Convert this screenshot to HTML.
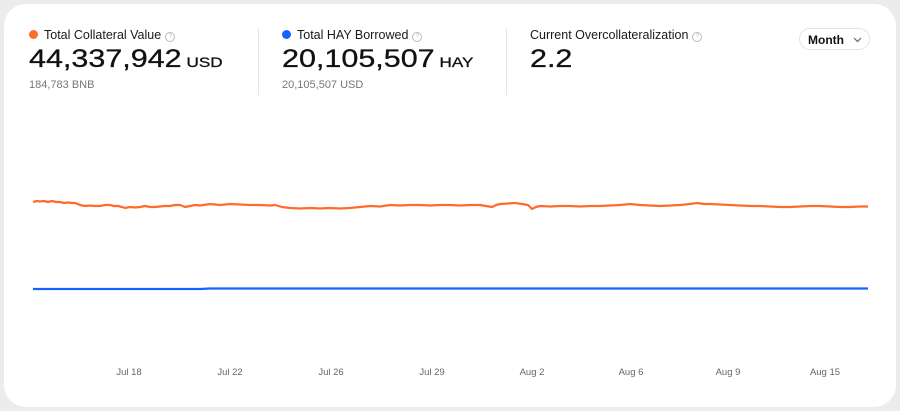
<!DOCTYPE html>
<html><head><style>
body{margin:0;width:900px;height:411px;background:#ececec;font-family:"Liberation Sans",sans-serif;overflow:hidden;position:relative}
.card{position:absolute;left:4px;top:4px;width:892px;height:403px;background:#fff;border-radius:22px}
.lbl{position:absolute;top:28px;font-size:12.5px;color:#1a1a1a;white-space:nowrap}
.dot{display:inline-block;width:9px;height:9px;border-radius:50%;margin-right:6px;vertical-align:0}
.q{display:inline-block;width:8px;height:8px;border:1px solid #bbb;border-radius:50%;font-size:6px;color:#bbb;text-align:center;line-height:8px;margin-left:4px;vertical-align:1px}
.big{position:absolute;top:45px;font-size:25px;color:#111;transform:scaleX(1.22);transform-origin:left;white-space:nowrap;letter-spacing:0;-webkit-text-stroke:0.3px #111}
.big span{font-size:14px;margin-left:4px}
.sub{position:absolute;top:79px;font-size:11px;color:#777}
.sep{position:absolute;top:28px;width:1px;height:67px;background:#e6e6e6}
.btn{position:absolute;left:799px;top:28px;width:71px;height:22px;border:1px solid #e3e3e3;border-radius:12px;font-size:12px;font-weight:bold;color:#111;line-height:22px;padding-left:8px;box-sizing:border-box}
.ax{position:absolute;top:367px;font-size:9.5px;color:#666;transform:translateX(-50%)}
</style></head><body>
<div class="card"></div>
<div class="lbl" style="left:29px"><span class="dot" style="background:#ff6b2c"></span>Total Collateral Value<span class="q">?</span></div>
<div class="big" style="left:29px">44,337,942<span>USD</span></div>
<div class="sub" style="left:29px">184,783 BNB</div>
<div class="sep" style="left:258px"></div>
<div class="lbl" style="left:282px"><span class="dot" style="background:#1463ff"></span>Total HAY Borrowed<span class="q">?</span></div>
<div class="big" style="left:282px">20,105,507<span>HAY</span></div>
<div class="sub" style="left:282px">20,105,507 USD</div>
<div class="sep" style="left:506px"></div>
<div class="lbl" style="left:530px">Current Overcollateralization<span class="q">?</span></div>
<div class="big" style="left:530px">2.2</div>
<div class="btn">Month<svg style="position:absolute;left:53px;top:8px" width="9" height="6"><path d="M1 1l3.5 3.5L8 1" fill="none" stroke="#666" stroke-width="1.2"/></svg></div>
<svg style="position:absolute;left:0;top:0" width="900" height="411">
<polyline fill="none" stroke="#ff6b2c" stroke-width="2.2" stroke-linejoin="round" points="33,202 37,201 40,201.5 44,201 48,202 52,201 56,202 60,202 64,203 68,202.5 72,203 75,203 80,205 85,206 90,205.5 95,206 100,206 105,205 110,205 114,206 118,206 122,207 125,208 130,207 135,207.5 140,207 145,206 150,207 155,207 160,206.5 165,206 170,206 175,205 180,205 185,207 190,206 195,205 200,205.5 210,204 220,205 230,204 240,204.5 250,205 260,205 270,205.5 275,205 282,207 290,208 300,208.5 310,208 320,208.5 330,208 340,208.5 350,208 360,207 370,206 380,206.5 390,205 400,205.5 410,205 420,205 430,205.5 440,205 450,205 460,205.5 470,205 480,205 486,206 492,207 496,205 500,204 508,203.5 515,203 522,204 528,205 532,209 536,207 540,206 550,206.5 560,206 570,206 580,206.5 590,206 600,206 610,205.5 620,205 630,204 640,205 650,205.5 660,206 670,205.5 680,205 690,204 697,203 704,204 710,204 720,204.5 730,205 740,205.5 750,206 760,206 770,206.5 780,207 790,207 800,206.5 810,206 820,206 830,206.5 840,207 850,207 860,206.5 868,206.5"/>
<polyline fill="none" stroke="#1463ff" stroke-width="2.2" points="33,289 200,289 210,288.5 868,288.5"/>
</svg>
<div class="ax" style="left:129px">Jul 18</div>
<div class="ax" style="left:230px">Jul 22</div>
<div class="ax" style="left:331px">Jul 26</div>
<div class="ax" style="left:432px">Jul 29</div>
<div class="ax" style="left:532px">Aug 2</div>
<div class="ax" style="left:631px">Aug 6</div>
<div class="ax" style="left:728px">Aug 9</div>
<div class="ax" style="left:825px">Aug 15</div>
</body></html>
